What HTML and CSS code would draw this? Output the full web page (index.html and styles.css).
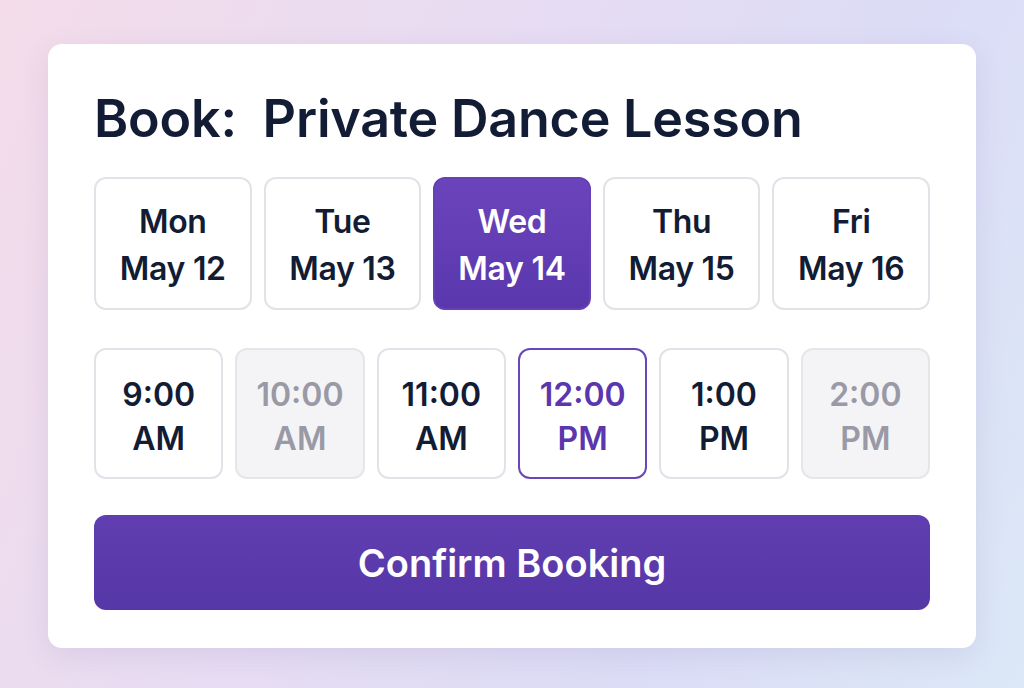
FILE: index.html
```html
<!DOCTYPE html>
<html>
  <head>
    <title>Book: Private Dance Lesson</title>
    <link rel="stylesheet" href="styles.css">
  </head>
  <body>
    <div class="card">
      <h1 class="title">Book:&nbsp; Private Dance Lesson</h1>

      <div class="date-row">
        <button class="date-button">Mon<br>May 12</button>
        <button class="date-button">Tue<br>May 13</button>
        <button class="date-button date-selected">Wed<br>May 14</button>
        <button class="date-button">Thu<br>May 15</button>
        <button class="date-button">Fri<br>May 16</button>
      </div>

      <div class="time-row">
        <button class="time-button">9:00<br>AM</button>
        <button class="time-button time-disabled">10:00<br>AM</button>
        <button class="time-button">11:00<br>AM</button>
        <button class="time-button time-selected">12:00<br>PM</button>
        <button class="time-button">1:00<br>PM</button>
        <button class="time-button time-disabled">2:00<br>PM</button>
      </div>

      <button class="confirm-button">Confirm Booking</button>
    </div>
  </body>
</html>
```

FILE: styles.css
```css
body {
  margin: 0;
  height: 688px;
  overflow: hidden;
  font-family: Inter, "Noto Sans", sans-serif;
  color: #121c34;
  background: linear-gradient(115deg, #f4dcea 0%, #e7dcf3 40%, #dcdcf6 70%, #dbe8f7 100%);
}

.card {
  box-sizing: border-box;
  width: 928px;
  height: 604px;
  margin: 44px 48px 0 48px;
  padding: 40px 46px 0 46px;
  background-color: #ffffff;
  border-radius: 14px;
  box-shadow: 0 8px 28px rgba(110, 90, 160, 0.12);
}

.title {
  margin: 0;
  font-size: 52px;
  font-weight: 600;
  line-height: 70px;
  letter-spacing: -0.2px;
}

.date-row {
  display: grid;
  grid-template-columns: repeat(5, 1fr);
  gap: 12px;
  margin-top: 23px;
}

.time-row {
  display: grid;
  grid-template-columns: repeat(6, 1fr);
  gap: 12px;
  margin-top: 38px;
}

.date-button,
.time-button {
  font-family: inherit;
  font-weight: 600;
  color: #121c34;
  background-color: #ffffff;
  border: 2px solid #e2e2e8;
  border-radius: 12px;
  padding: 0;
}

.date-button {
  height: 133px;
  padding-top: 3px;
  font-size: 32px;
  line-height: 47px;
  letter-spacing: -0.3px;
}

.date-selected {
  color: #ffffff;
  border-color: #6640b7;
  background: linear-gradient(180deg, #6b44bb 0%, #5a37ad 100%);
}

.time-button {
  height: 131px;
  padding-top: 6px;
  font-size: 32px;
  line-height: 44px;
}

.time-disabled {
  color: #9a99a6;
  background-color: #f4f4f6;
  border-color: #e6e6ea;
}

.time-selected {
  color: #5b36ad;
  border-color: #6a47b8;
}

.confirm-button {
  display: block;
  width: 100%;
  height: 95px;
  margin-top: 36px;
  font-family: inherit;
  font-size: 38px;
  font-weight: 600;
  color: #ffffff;
  background: linear-gradient(180deg, #603eb1 0%, #5637a6 100%);
  border: none;
  border-radius: 12px;
}
```
